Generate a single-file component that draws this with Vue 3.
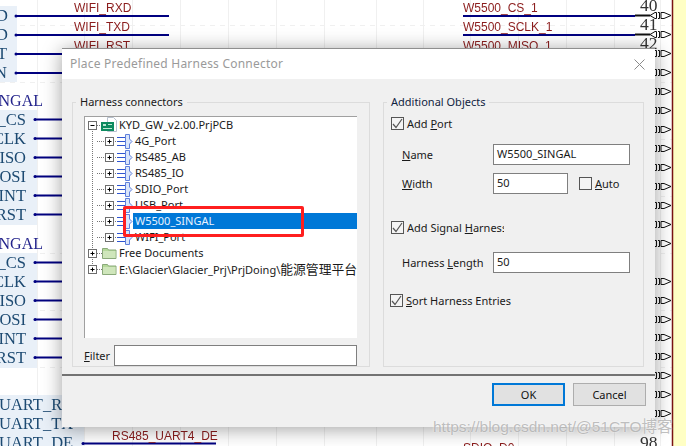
<script setup>
const gridX = [37, 84, 132, 180, 228, 276, 324, 376, 423, 470, 518, 566, 614, 660]
const gridY = [25, 82, 139, 196, 253, 310, 367, 424]
const pinRows = [15.5, 34.5, 53.5, 72.5, 91.5, 110.5, 129.5, 148.5, 167.5, 186.5, 205.5, 224.5, 243.5, 281.5, 300.5, 319.5, 337.5, 356.5, 375.5, 394.5, 413.5]
const netLeft = [
  { t: 'W5500_CS', y: 119.5 }, { t: 'W5500_SCLK', y: 138.5 }, { t: 'W5500_MISO', y: 157.5 },
  { t: 'W5500_MOSI', y: 176.5 }, { t: 'W5500_INT', y: 195.5 }, { t: 'W5500_RST', y: 214.5 },
  { t: 'W5500_CS', y: 262.5 }, { t: 'W5500_SCLK', y: 281.5 }, { t: 'W5500_MISO', y: 300.5 },
  { t: 'W5500_MOSI', y: 319.5 }, { t: 'W5500_INT', y: 338.5 }, { t: 'W5500_RST', y: 357.5 },
]
const treeRows = [
  { label: 'KYD_GW_v2.00.PrjPCB', kind: 'root' },
  { label: '4G_Port', kind: 'child' },
  { label: 'RS485_AB', kind: 'child' },
  { label: 'RS485_IO', kind: 'child' },
  { label: 'SDIO_Port', kind: 'child' },
  { label: 'USB_Port', kind: 'child' },
  { label: 'W5500_SINGAL', kind: 'child', selected: true },
  { label: 'WIFI_Port', kind: 'child' },
  { label: 'Free Documents', kind: 'folder' },
  { label: 'E:\\Glacier\\Glacier_Prj\\PrjDoing\\', cjk: '能源管理平台', kind: 'folder', last: true },
]
</script>

<template>
  <div class="screen">
    <svg class="schematic" width="686" height="446" viewBox="0 0 686 446">
      <rect width="686" height="446" fill="#ffffff" />
      <g stroke="#f0f0f0">
        <line v-for="x in gridX" :key="'x' + x" :x1="x + 0.5" y1="0" :x2="x + 0.5" y2="446" />
        <line v-for="y in gridY" :key="'y' + y" x1="0" :y1="y + 0.5" x2="686" :y2="y + 0.5" stroke-dasharray="5 5" />
      </g>

      <rect x="0" y="6" width="17" height="76" fill="#e9f0f8" />
      <rect x="0" y="110" width="37" height="115" fill="#e9f0f8" />
      <rect x="0" y="253" width="37" height="115" fill="#e9f0f8" />
      <rect x="0" y="395" width="64" height="19" fill="#e9f0f8" />
      <rect x="0" y="414" width="84" height="32" fill="#e9f0f8" />
      <rect x="672" y="0" width="14" height="446" fill="#ffffc4" />
      <line x1="672.5" y1="0" x2="672.5" y2="446" stroke="#7a1414" stroke-width="1.5" />

      <g class="port-name">
        <text x="8" y="21" text-anchor="end">D</text>
        <text x="8" y="40" text-anchor="end">D</text>
        <text x="7" y="59" text-anchor="end">T</text>
        <text x="7" y="78" text-anchor="end">N</text>
        <text v-for="n in netLeft" :key="n.t + n.y" x="26" :y="n.y + 5.5" text-anchor="end">{{ n.t }}</text>
        <text x="-1" y="410">UART_RX</text>
        <text x="-1" y="429">UART_TX</text>
        <text x="-1" y="448">UART_DE</text>
      </g>
      <g class="harness-name">
        <text x="43" y="106" text-anchor="end">W5500_SINGAL</text>
        <text x="43" y="249" text-anchor="end">W5500_SINGAL</text>
      </g>

      <g stroke="#000080" stroke-width="1.8" fill="#000080">
        <line x1="16" y1="16" x2="169" y2="16" />
        <line x1="16" y1="35" x2="169" y2="35" />
        <line x1="16" y1="54" x2="80" y2="54" />
        <line x1="16" y1="73" x2="80" y2="73" />
        <line v-for="n in netLeft" :key="'w' + n.y" x1="35" :y1="n.y" x2="80" :y2="n.y" />
        <line x1="83" y1="443.500" x2="216" y2="443.500" />
        <line x1="463" y1="16" x2="635" y2="16" />
        <line x1="463" y1="35" x2="635" y2="35" />
        <circle cx="16" cy="16" r="1.500" stroke="none" />
        <circle cx="16" cy="35" r="1.500" stroke="none" />
        <circle cx="16" cy="54" r="1.500" stroke="none" />
        <circle cx="16" cy="73" r="1.500" stroke="none" />
        <circle v-for="n in netLeft" :key="'d' + n.y" cx="35" :cy="n.y" r="1.500" stroke="none" />
        <circle cx="83" cy="443.500" r="1.500" stroke="none" />
      </g>

      <g class="net-name">
        <text x="74" y="12">WIFI_RXD</text>
        <text x="74" y="31">WIFI_TXD</text>
        <text x="74" y="50">WIFI_RST</text>
        <text x="463" y="12">W5500_CS_1</text>
        <text x="463" y="31">W5500_SCLK_1</text>
        <text x="463" y="50">W5500_MISO_1</text>
        <text x="112" y="439.500">RS485_UART4_DE</text>
        <text x="463" y="452">SDIO_D0</text>
      </g>

      <g v-for="y in pinRows" :key="'p' + y" fill="none" stroke="#111111" stroke-width="1">
        <line x1="635" :y1="y" x2="650" :y2="y" stroke-width="2" />
        <path :d="`M650 ${y}l5 -3h1.500v6h-1.500zM658 ${y - 3}h1.500v6h-1.500M661 ${y - 3}h3l7 3l-7 3h-3z`" />
      </g>

      <g class="pin-number">
        <text x="640" y="11">40</text>
        <text x="640" y="30">41</text>
        <text x="640" y="49">42</text>
        <text x="640" y="448">98</text>
      </g>
    </svg>

    <section class="dialog">
      <header class="titlebar">
        <span class="title">Place Predefined Harness Connector</span>
        <svg class="close" width="11" height="11" viewBox="0 0 11 11">
          <path d="M0.5 0.5L10.5 10.5M10.5 0.5L0.5 10.5" stroke="#8a8a8a" fill="none" />
        </svg>
      </header>

      <div class="body">
        <div class="group group-left">
          <span class="legend">Harness connectors</span>
          <div class="tree">
            <div
              v-for="(row, i) in treeRows"
              :key="row.label"
              class="tree-row"
            >
              <svg class="glyphs" :width="row.kind === 'child' ? 48 : 32" height="16" :viewBox="`0 0 ${row.kind === 'child' ? 48 : 32} 16`">
                <g stroke="#777777" stroke-dasharray="1 1" fill="none">
                  <line v-if="i > 0" x1="7.5" y1="0" x2="7.5" :y2="row.last ? 8 : 16" />
                  <line v-if="i === 0" x1="7.5" y1="8" x2="7.5" y2="16" />
                  <line v-if="row.kind === 'child'" x1="12" y1="8.5" x2="32" y2="8.5" />
                  <line v-else x1="12" y1="8.5" x2="17" y2="8.5" />
                </g>
                <template v-if="row.kind === 'child'">
                  <rect x="20.5" y="4.5" width="8" height="8" fill="#fff" stroke="#6e6e6e" />
                  <path d="M22.5 8.5h4M24.5 6.5v4" stroke="#000" fill="none" />
                  <g fill="none" stroke="#2f55d0">
                    <path d="M32 4.5h8M32 8.5h8M32 12.5h8" />
                    <path d="M40.5 1.5h4v4.5l2.500 2.500l-2.500 2.500v4.500h-4z" fill="#d9e5fa" stroke="#5f80dc" />
                  </g>
                </template>
                <template v-else>
                  <rect x="3.500" y="4.500" width="8" height="8" fill="#fff" stroke="#6e6e6e" />
                  <path d="M5.500 8.500h4" stroke="#000" fill="none" />
                  <path v-if="row.kind === 'folder'" d="M7.500 6.500v4" stroke="#000" fill="none" />
                </template>
                <template v-if="row.kind === 'root'">
                  <path d="M22.500 0.500h6l3 3v11h-9z" fill="#fff" stroke="#b9c2cf" />
                  <rect x="16" y="5" width="13" height="9" fill="#0d8a5f" />
                  <path d="M18 7h3v2h-3zM23 7h4v1h-4zM18 11h9v1h-9z" fill="#bfe8d4" />
                </template>
                <template v-if="row.kind === 'folder'">
                  <path d="M17.500 3.500h5l1 1.500h7.500v8.500h-13.500z" fill="#b5d99a" stroke="#8aa97a" />
                  <rect x="18" y="6" width="12.500" height="7" fill="#cfe6bb" />
                </template>
              </svg>
              <span class="tree-label" :class="{ selected: row.selected }">{{ row.label }}<span v-if="row.cjk" class="cjk">{{ row.cjk }}</span></span>
            </div>
          </div>
          <div class="filter">
            <label class="filter-label"><u>F</u>ilter</label>
            <span class="textbox filter-box"></span>
          </div>
        </div>

        <div class="group group-right">
          <span class="legend legend-blue">Additional Objects</span>

          <div class="check-line first">
            <span class="check">
              <svg width="11" height="11" viewBox="0 0 11 11"><path d="M1 6l3 3.500l6 -8.500" fill="none" stroke="#555" stroke-width="1.200" /></svg>
            </span>
            <span>Add <u>P</u>ort</span>
          </div>

          <div class="field-line name-line">
            <span class="field-label"><u>N</u>ame</span>
            <span class="textbox wide">W5500_SINGAL</span>
          </div>
          <div class="field-line width-line">
            <span class="field-label"><u>W</u>idth</span>
            <span class="textbox short">50</span>
            <span class="check auto-check"></span>
            <span><u>A</u>uto</span>
          </div>

          <div class="check-line signal-line">
            <span class="check">
              <svg width="11" height="11" viewBox="0 0 11 11"><path d="M1 6l3 3.500l6 -8.500" fill="none" stroke="#555" stroke-width="1.200" /></svg>
            </span>
            <span class="clipped">Add Signal <u>H</u>arness</span>
          </div>

          <div class="field-line length-line">
            <span class="field-label">Harness <u>L</u>ength</span>
            <span class="textbox wide">50</span>
          </div>

          <div class="check-line sort-line">
            <span class="check">
              <svg width="11" height="11" viewBox="0 0 11 11"><path d="M1 6l3 3.500l6 -8.500" fill="none" stroke="#555" stroke-width="1.200" /></svg>
            </span>
            <span><u>S</u>ort Harness Entries</span>
          </div>
        </div>
      </div>

      <footer class="footer">
        <button class="btn btn-primary">OK</button>
        <button class="btn">Cancel</button>
      </footer>
    </section>

    <div class="callout"></div>
    <div class="watermark">https://blog.csdn.net/@51CTO博客</div>
  </div>
</template>

<style scoped>
.screen {
  position: relative;
  width: 686px;
  height: 446px;
  overflow: hidden;
  font-family: "Noto Sans", "Noto Sans CJK SC", sans-serif;
  font-size: 11px;
  color: #1a1a1a;
}
.schematic {
  position: absolute;
  left: 0;
  top: 0;
  display: block;
  filter: blur(0.3px);
}
.port-name text {
  font-family: "Liberation Serif", serif;
  font-size: 16.500px;
  fill: #1d4a72;
}
.harness-name text {
  font-family: "Liberation Serif", serif;
  font-size: 16px;
  fill: #24248c;
}
.net-name text {
  font-family: "Liberation Sans", sans-serif;
  font-size: 12px;
  fill: #8b1c1c;
}
.pin-number text {
  font-family: "Liberation Serif", serif;
  font-size: 17.500px;
  fill: #333333;
}
.dialog {
  position: absolute;
  left: 62px;
  top: 48px;
  width: 593px;
  height: 379px;
  box-sizing: border-box;
  border-top: 1px solid #8f8f8f;
  background: #f0f0f0;
  box-shadow: 0 2px 18px rgba(0, 0, 0, 0.38);
  display: flex;
  flex-direction: column;
}
.titlebar {
  height: 30px;
  flex: none;
  background: #ffffff;
  display: flex;
  align-items: center;
  justify-content: space-between;
  padding: 0 10px 0 8px;
}
.title {
  color: #9a9a9a;
  font-size: 12px;
  letter-spacing: 0.22px;
  margin-top: -1px;
}
.body {
  flex: 1;
  display: flex;
  gap: 13px;
  padding: 23px 11px 7px 10px;
  border-bottom: 2px solid #737373;
}
.group {
  position: relative;
  box-sizing: border-box;
  border: 1px solid #dcdcdc;
  flex: none;
}
.group-left {
  width: 298px;
  padding: 13px 12px 0 11px;
}
.group-right {
  width: 261px;
  padding-left: 7px;
}
.legend {
  position: absolute;
  left: 3px;
  top: -9px;
  padding: 0 4px;
  background: #f0f0f0;
  line-height: 16px;
}
.legend-blue {
  color: #10243f;
}
.tree {
  height: 222px;
  box-sizing: border-box;
  background: #ffffff;
  border-top: 1px solid #a0a0a0;
  border-left: 1px solid #a0a0a0;
  overflow: hidden;
}
.tree-row {
  display: flex;
  align-items: center;
  height: 16px;
  white-space: nowrap;
}
.glyphs {
  flex: none;
  display: block;
}
.tree-label {
  padding: 0 0 1px 2px;
  line-height: 15px;
}
.tree-label.selected {
  flex: 1;
  background: #0078d7;
  color: #e8f3ff;
}
.cjk {
  font-family: "Noto Sans CJK SC", sans-serif;
  font-size: 12.800px;
}
.filter {
  display: flex;
  align-items: center;
  margin-top: 7px;
  gap: 3px;
}
.filter-label {
  width: 27px;
  flex: none;
}
.textbox {
  display: block;
  box-sizing: border-box;
  height: 21px;
  line-height: 17px;
  padding: 0 3px;
  background: #ffffff;
  border: 1px solid #7f7f7f;
}
.filter-box {
  flex: 1;
}
.check {
  display: flex;
  align-items: center;
  justify-content: center;
  box-sizing: border-box;
  width: 13px;
  height: 13px;
  flex: none;
  border: 1px solid #555555;
  background: #f4f4f4;
}
.check-line {
  display: flex;
  align-items: center;
  gap: 3px;
  height: 16px;
}
.check-line.first {
  margin-top: 12px;
}
.field-line {
  display: flex;
  align-items: center;
  padding-left: 11px;
}
.field-label {
  width: 91px;
  flex: none;
}
.wide {
  width: 137px;
}
.short {
  width: 75px;
}
.auto-check {
  margin-left: 11px;
  margin-right: 3px;
}
.name-line {
  margin-top: 13px;
}
.width-line {
  margin-top: 8px;
}
.signal-line {
  margin-top: 25px;
}
.clipped {
  display: inline-block;
  width: 97px;
  overflow: hidden;
  white-space: nowrap;
}
.length-line {
  margin-top: 17px;
}
.sort-line {
  margin-top: 19px;
  margin-left: -1px;
}
.footer {
  flex: 1;
  display: flex;
  justify-content: flex-end;
  align-items: flex-start;
  gap: 8px;
  padding: 7px 9px 0 0;
}
.btn {
  box-sizing: border-box;
  width: 73px;
  height: 23px;
  padding: 0;
  background: #e1e1e1;
  border: 1px solid #adadad;
  font: inherit;
  color: #111111;
}
.btn-primary {
  border: 2px solid #0078d7;
}
.callout {
  position: absolute;
  left: 123px;
  top: 206px;
  width: 181px;
  height: 31px;
  box-sizing: border-box;
  border: 3px solid #ff1f1f;
  border-radius: 2px;
}
.watermark {
  position: absolute;
  left: 433px;
  top: 417px;
  font-family: "Liberation Sans", "Noto Sans CJK SC", sans-serif;
  font-size: 15.500px;
  line-height: 20px;
  white-space: nowrap;
  color: rgba(150, 150, 150, 0.6);
  text-shadow: 0 0 2px #ffffff;
}
</style>
